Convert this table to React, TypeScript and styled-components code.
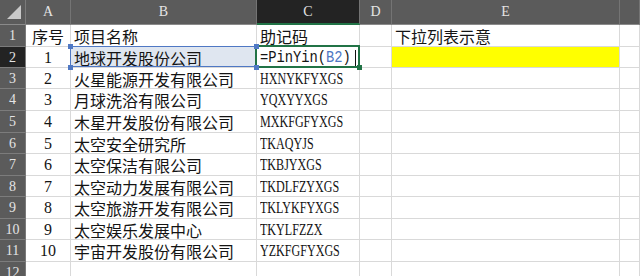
import React from 'react';
import styled, { createGlobalStyle, css } from 'styled-components';

const GlobalStyle = createGlobalStyle`
  html, body {
    margin: 0;
    padding: 0;
    background: #fff;
    overflow: hidden;
  }
`;

// the last column runs off the right edge, so its letter is not seen
const COLUMNS = ['A', 'B', 'C', 'D', 'E', ''];
const ROW_HEIGHTS = [22, 21, 21, 22, 22, 21, 22, 21, 22, 21, 22, 22];

const ITEMS: [number, string, string][] = [
  [2, '火星能源开发有限公司', 'HXNYKFYXGS'],
  [3, '月球洗浴有限公司', 'YQXYYXGS'],
  [4, '木星开发股份有限公司', 'MXKFGFYXGS'],
  [5, '太空安全研究所', 'TKAQYJS'],
  [6, '太空保洁有限公司', 'TKBJYXGS'],
  [7, '太空动力发展有限公司', 'TKDLFZYXGS'],
  [8, '太空旅游开发有限公司', 'TKLYKFYXGS'],
  [9, '太空娱乐发展中心', 'TKYLFZZX'],
  [10, '宇宙开发股份有限公司', 'YZKFGFYXGS'],
];

const Sheet = styled.div`
  display: grid;
  grid-template-columns: 26px 45px 186px 103px 32px 228px 1fr;
  grid-template-rows: 25px ${ROW_HEIGHTS.map(h => `${h}px`).join(' ')};
  width: 640px;
  height: 276px;
  overflow: hidden;
  font-family: 'Liberation Serif', 'Noto Sans CJK SC', serif;
`;

const Corner = styled.div`
  display: flex;
  align-items: flex-end;
  justify-content: flex-end;
  padding: 0 4px 5px 0;
  box-sizing: border-box;
  background: #5b5b5b;
  border-right: 1px solid #7a7a7a;
  border-bottom: 1px solid #8a8a8a;
`;

const Triangle = styled.div`
  width: 0;
  height: 0;
  border-left: 14px solid transparent;
  border-bottom: 14px solid #c9c9c9;
`;

const HeaderBase = css<{ $selected?: boolean }>`
  display: flex;
  align-items: center;
  justify-content: center;
  box-sizing: border-box;
  background: ${p => (p.$selected ? '#232323' : '#5b5b5b')};
  color: #e4e4e4;
  font-size: 14px;
  overflow: hidden;
`;

const ColHeader = styled.div<{ $selected?: boolean }>`
  ${HeaderBase};
  border-right: 1px solid #747474;
  border-bottom: ${p => (p.$selected ? '2px solid #217346' : '1px solid #8a8a8a')};
`;

const RowHeader = styled.div<{ $selected?: boolean }>`
  ${HeaderBase};
  border-right: 1px solid #7a7a7a;
  border-bottom: 1px solid #7c7c7c;
  padding-top: 1px;
`;

type Mark = 'ref' | 'active';

const Cell = styled.div<{ $center?: boolean; $fill?: string; $mark?: Mark }>`
  display: flex;
  align-items: center;
  justify-content: ${p => (p.$center ? 'center' : 'flex-start')};
  box-sizing: border-box;
  padding: 1px 3px 0;
  min-width: 0;
  border-right: 1px solid #d9d9d9;
  border-bottom: 1px solid #d9d9d9;
  background: ${p => p.$fill ?? '#fff'};
  color: #141414;
  font-size: 16px;
  white-space: nowrap;
  overflow: ${p => (p.$mark ? 'visible' : 'hidden')};
  position: ${p => (p.$mark ? 'relative' : 'static')};

  ${p =>
    p.$mark === 'ref' &&
    css`
      &::after {
        content: '';
        position: absolute;
        top: -1px;
        left: -1px;
        right: 0;
        bottom: 0;
        border: 1px solid #4f78c4;
        pointer-events: none;
      }
    `}

  ${p =>
    p.$mark === 'active' &&
    css`
      &::after {
        content: '';
        position: absolute;
        top: -2px;
        left: -2px;
        right: -1px;
        bottom: -1px;
        border: 2px solid #217346;
        pointer-events: none;
      }
    `}
`;

const Handle = styled.span<{ $x: 'left' | 'right'; $y: 'top' | 'bottom'; $color: string }>`
  position: absolute;
  z-index: 2;
  width: 5px;
  height: 5px;
  background: ${p => p.$color};
  ${p => (p.$x === 'left' ? 'left: -3px;' : 'right: -3px;')}
  ${p => (p.$y === 'top' ? 'top: -3px;' : 'bottom: -3px;')}
`;

const Code = styled.span`
  display: inline-block;
  font-family: 'Liberation Serif', serif;
  font-size: 17px;
  transform: scaleX(0.71);
  transform-origin: left center;
`;

const Formula = styled.span`
  display: inline-block;
  font-family: 'Liberation Mono', monospace;
  font-size: 16px;
  transform: scaleX(0.86);
  transform-origin: left center;
`;

const RefText = styled.span`
  color: #4f78c4;
`;

const Caret = styled.span`
  display: inline-block;
  width: 1px;
  height: 16px;
  margin-left: -11px;
  background: #111;
`;

const App: React.FC = () => {
  return (
    <>
      <GlobalStyle />
      <Sheet>
        <Corner>
          <Triangle />
        </Corner>
        {COLUMNS.map((c, i) => (
          <ColHeader key={i} $selected={c === 'C'}>
            {c}
          </ColHeader>
        ))}

        <RowHeader>1</RowHeader>
        <Cell $center>序号</Cell>
        <Cell>项目名称</Cell>
        <Cell>助记码</Cell>
        <Cell />
        <Cell>下拉列表示意</Cell>
        <Cell />

        <RowHeader $selected>2</RowHeader>
        <Cell $center>1</Cell>
        <Cell $fill="#dfe6f0" $mark="ref">
          地球开发股份公司
          <Handle $x="left" $y="top" $color="#4f78c4" />
          <Handle $x="right" $y="top" $color="#4f78c4" />
          <Handle $x="left" $y="bottom" $color="#4f78c4" />
          <Handle $x="right" $y="bottom" $color="#4f78c4" />
        </Cell>
        <Cell $mark="active">
          <Formula>
            =PinYin(<RefText>B2</RefText>)
          </Formula>
          <Caret />
          <Handle $x="right" $y="bottom" $color="#217346" />
        </Cell>
        <Cell />
        <Cell $fill="#ffff00" />
        <Cell />

        {ITEMS.map(([n, name, code]) => (
          <React.Fragment key={n}>
            <RowHeader>{n + 1}</RowHeader>
            <Cell $center>{n}</Cell>
            <Cell>{name}</Cell>
            <Cell>
              <Code>{code}</Code>
            </Cell>
            <Cell />
            <Cell />
            <Cell />
          </React.Fragment>
        ))}

        <RowHeader>12</RowHeader>
        <Cell />
        <Cell />
        <Cell />
        <Cell />
        <Cell />
        <Cell />
      </Sheet>
    </>
  );
};

export default App;
